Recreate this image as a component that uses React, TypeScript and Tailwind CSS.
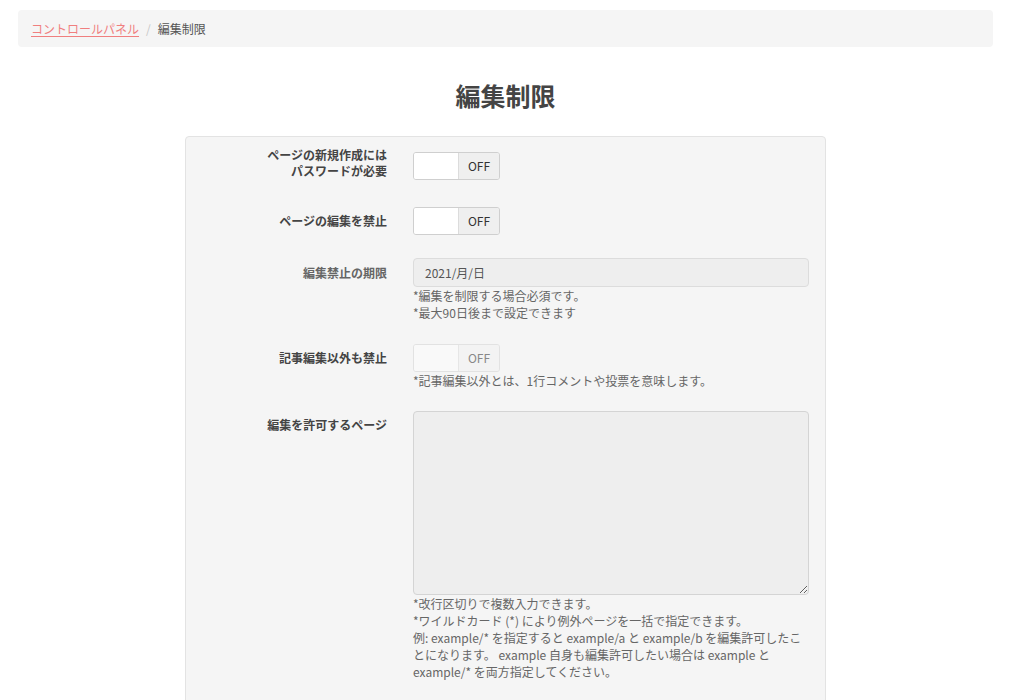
const font = { fontFamily: '"Noto Sans CJK JP", "Noto Sans", sans-serif' };

function Toggle({ disabled = false }: { disabled?: boolean }) {
  return (
    <div
      className={
        'flex h-[28px] w-[87px] overflow-hidden rounded-[3px] border ' +
        (disabled ? 'border-[#e2e2e2]' : 'border-[#cfcfcf]')
      }
    >
      <div className={'w-[44px] ' + (disabled ? 'bg-[#f9f9f9]' : 'bg-white')} />
      <div
        className={
          'flex flex-1 items-center justify-center border-l text-[12px] ' +
          (disabled
            ? 'border-[#e6e6e6] bg-[#f3f3f3] text-[#888]'
            : 'border-[#dcdcdc] bg-[#efefef] text-[#333]')
        }
      >
        OFF
      </div>
    </div>
  );
}

function Row({
  label,
  children,
  className = '',
}: {
  label: React.ReactNode;
  children: React.ReactNode;
  className?: string;
}) {
  return (
    <div className={'flex items-start gap-[26px] ' + className}>
      <div className="flex min-h-[28px] w-[201px] shrink-0 items-center justify-end text-right text-[12px] font-bold leading-[16px] text-[#444]">
        {label}
      </div>
      <div className="w-[396px]">{children}</div>
    </div>
  );
}

function Help({ children }: { children: React.ReactNode }) {
  return <div className="text-[12px] leading-[17px] text-[#666]">{children}</div>;
}

export default function App() {
  return (
    <div className="min-h-screen bg-white" style={font}>
      <div className="w-[1011px] pt-[10px]">
        <nav className="mx-[18px] flex h-[37px] items-center rounded-[4px] bg-[#f5f5f5] px-[13px] text-[12px]">
          <a href="#" className="text-[#f07f7f] underline underline-offset-2">
            コントロールパネル
          </a>
          <span className="px-[7px] text-[#c8c8c8]">/</span>
          <span className="text-[#555]">編集制限</span>
        </nav>

        <h1 className="mt-[30px] text-center text-[25px] font-bold leading-[36px] text-[#444]">編集制限</h1>

        <div className="mx-auto mt-[23px] w-[641px] rounded-[4px] border border-[#e3e3e3] bg-[#f5f5f5] pb-[40px] pt-[15px] pr-[16px]">
          <Row
            className="mb-[27px]"
            label={
              <span className="-mt-[6px]">
                ページの新規作成には
                <br />
                パスワードが必要
              </span>
            }
          >
            <Toggle />
          </Row>

          <Row className="mb-[23px]" label="ページの編集を禁止">
            <Toggle />
          </Row>

          <div className="mb-[23px] flex items-start gap-[26px]">
            <div className="flex h-[29px] w-[201px] shrink-0 items-center justify-end text-[12px] font-bold text-[#666]">
              編集禁止の期限
            </div>
            <div className="w-[396px]">
              <div className="flex h-[29px] items-center rounded-[4px] border border-[#dcdcdc] bg-[#eeeeee] px-[11px] text-[12px] text-[#555]">
                2021/月/日
              </div>
              <div>
                <Help>*編集を制限する場合必須です。</Help>
                <Help>*最大90日後まで設定できます</Help>
              </div>
            </div>
          </div>

          <Row className="mb-[22px]" label="記事編集以外も禁止">
            <Toggle disabled />
            <div>
              <Help>*記事編集以外とは、1行コメントや投票を意味します。</Help>
            </div>
          </Row>

          <Row label="編集を許可するページ">
            <textarea
              readOnly
              className="block h-[184px] w-full resize-y rounded-[4px] border border-[#d4d4d4] bg-[#eeeeee] outline-none"
            />
            <div>
              <Help>*改行区切りで複数入力できます。</Help>
              <Help>*ワイルドカード (*) により例外ページを一括で指定できます。</Help>
              <Help>
                例: example/* を指定すると example/a と example/b を編集許可したことになります。 example
                自身も編集許可したい場合は example と example/* を両方指定してください。
              </Help>
            </div>
          </Row>
        </div>
      </div>
    </div>
  );
}
